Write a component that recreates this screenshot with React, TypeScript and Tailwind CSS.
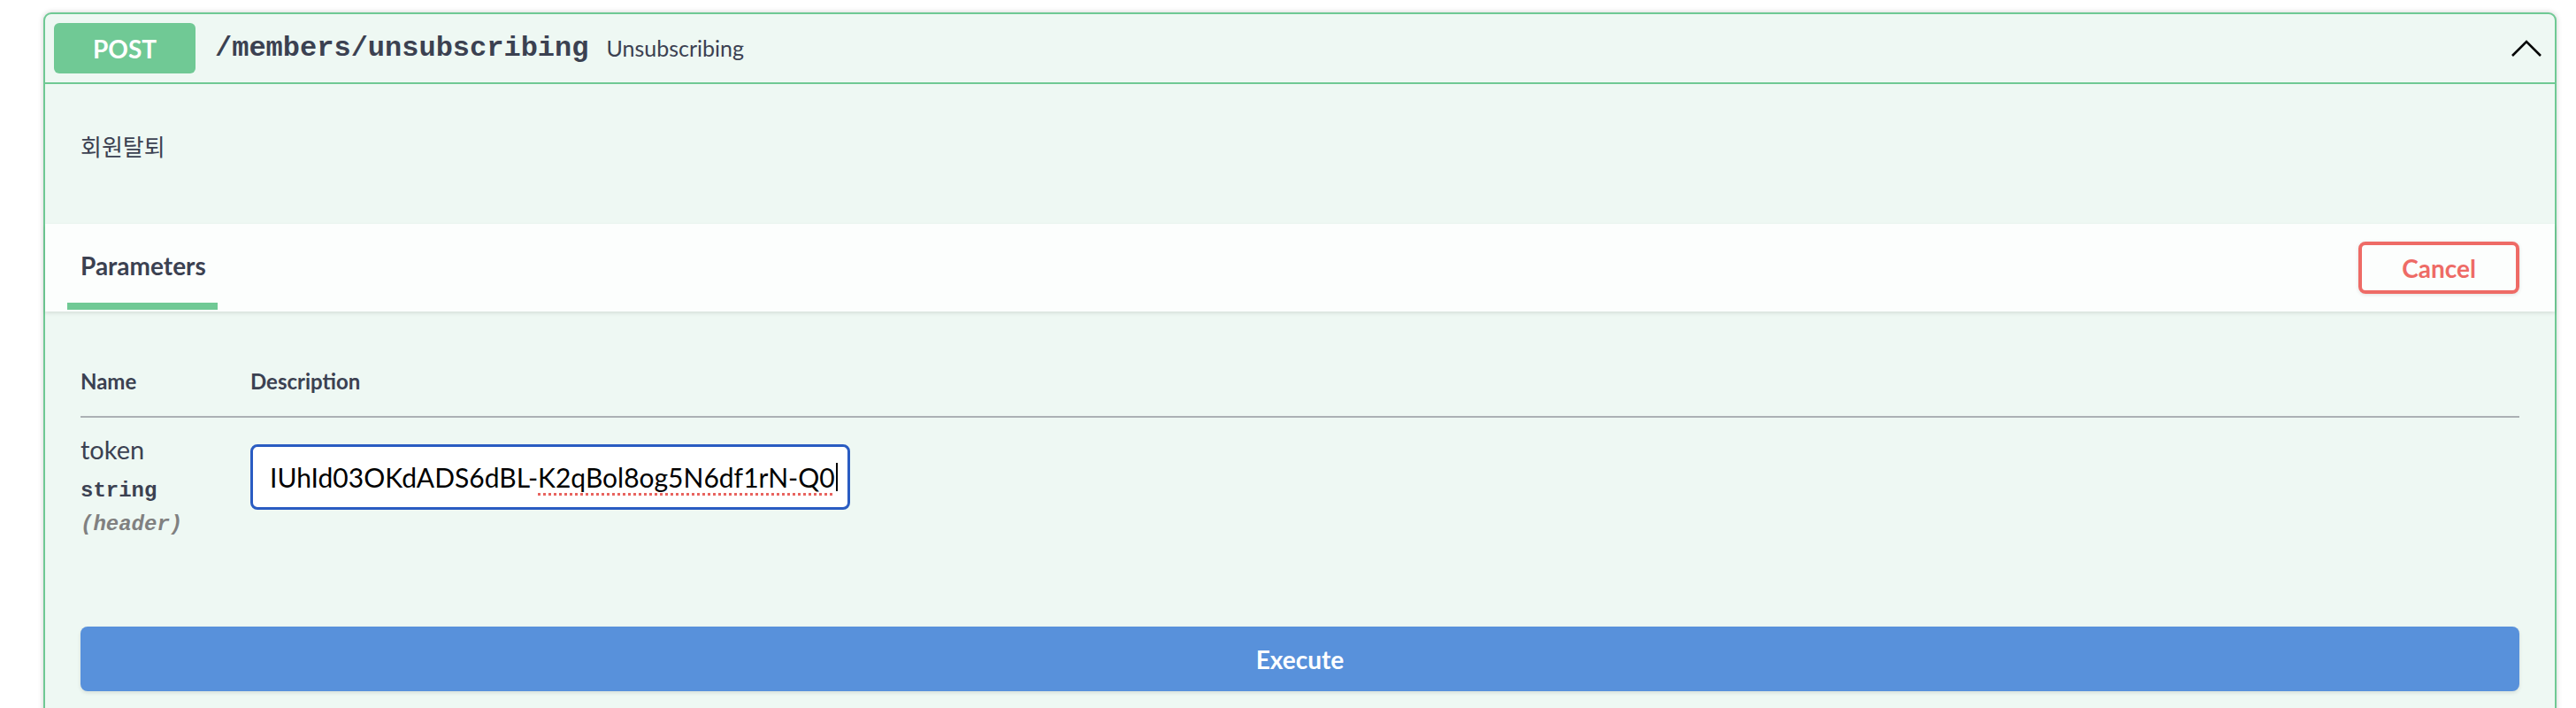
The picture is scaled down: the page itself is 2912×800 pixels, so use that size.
const ui = { fontFamily: 'Lato, "Noto Sans", sans-serif' };

function Chevron() {
  return (
    <svg width="36" height="20" viewBox="0 0 36 20" className="block">
      <polyline points="2,18 18,2 34,18" fill="none" stroke="#000" strokeWidth="2.6" />
    </svg>
  );
}

export default function App() {
  return (
    <div className="h-[800px] w-full overflow-hidden bg-white pt-[14px] pl-[49px] pr-[22px] text-[#3b4151]" style={ui}>
      <div className="rounded-t-[9px] border-2 border-[#6fc994] bg-[#eef8f3] pb-[60px] shadow-[0_0_6px_rgba(0,0,0,0.19)]">
        {/* summary */}
        <div className="flex items-center border-b-2 border-[#6fc994] p-[10px]">
          <div className="flex h-[57px] w-[160px] items-center justify-center rounded-[6px] bg-[#70c995] text-[28px] font-bold text-white">
            POST
          </div>
          <span className="pl-[22px] text-[32px] font-bold leading-none" style={{ fontFamily: '"Liberation Mono", monospace' }}>
            /members/unsubscribing
          </span>
          <span className="pl-[20px] text-[25px]">Unsubscribing</span>
          <div className="ml-auto mr-[4px]">
            <Chevron />
          </div>
        </div>

        {/* description */}
        <div className="h-[158px] px-[40px] pt-[55px]">
          <p className="text-[26px] leading-[30px]" style={{ fontFamily: '"Noto Sans CJK KR", sans-serif' }}>
            회원탈퇴
          </p>
        </div>

        {/* parameters header */}
        <div className="flex h-[99px] items-center justify-between bg-white/80 pr-[40px] pl-[25px] shadow-[0_2px_4px_rgba(0,0,0,0.1)]">
          <div className="self-end pb-[2px]">
            <span className="block pl-[15px] text-[28px] font-bold leading-[28px]">Parameters</span>
            <div className="mt-[28px] h-[8px] w-[170px] bg-[#70c995]" />
          </div>
          <button className="h-[59px] w-[182px] rounded-[8px] border-4 border-[#ee6b66] bg-transparent text-[28px] font-bold text-[#ee6b66] shadow-[0_1px_4px_rgba(0,0,0,0.12)]">
            Cancel
          </button>
        </div>

        {/* parameters table */}
        <div className="px-[40px] pt-[64px]">
          <div className="flex border-b-2 border-[#abb1b4] pb-[24px] text-[24px] font-bold leading-[30px]">
            <div className="w-[192px]">Name</div>
            <div>Description</div>
          </div>
          <div className="flex items-start pt-[19px]">
            <div className="w-[192px]">
              <div className="text-[29px] leading-[34px]">token</div>
              <div className="mt-[15px] text-[24px] font-bold leading-[30px]" style={{ fontFamily: '"Liberation Mono", monospace' }}>
                string
              </div>
              <div className="mt-[8px] text-[24px] font-bold italic leading-[30px] text-[#808080]" style={{ fontFamily: '"Liberation Mono", monospace' }}>
                (header)
              </div>
            </div>
            <div className="mt-[11px] flex h-[74px] w-[678px] items-center rounded-[8px] border-[3px] border-[#2a5cc2] bg-white pl-[19px] text-[30px] text-black">
              <span>IUhId03OKdADS6dBL-</span>
              <span className="underline decoration-[#e8645f] decoration-dotted decoration-[3px] underline-offset-[6px]">K2qBol8og5N6df1rN-Q0</span>
              <span className="ml-[1px] inline-block h-[32px] w-[2px] bg-black" />
            </div>
          </div>

          <button className="mt-[100px] flex h-[73px] w-full items-center justify-center rounded-[8px] bg-[#5891db] text-[28px] font-bold text-white shadow-[0_2px_4px_rgba(0,0,0,0.1)]">
            Execute
          </button>
        </div>
      </div>
    </div>
  );
}
